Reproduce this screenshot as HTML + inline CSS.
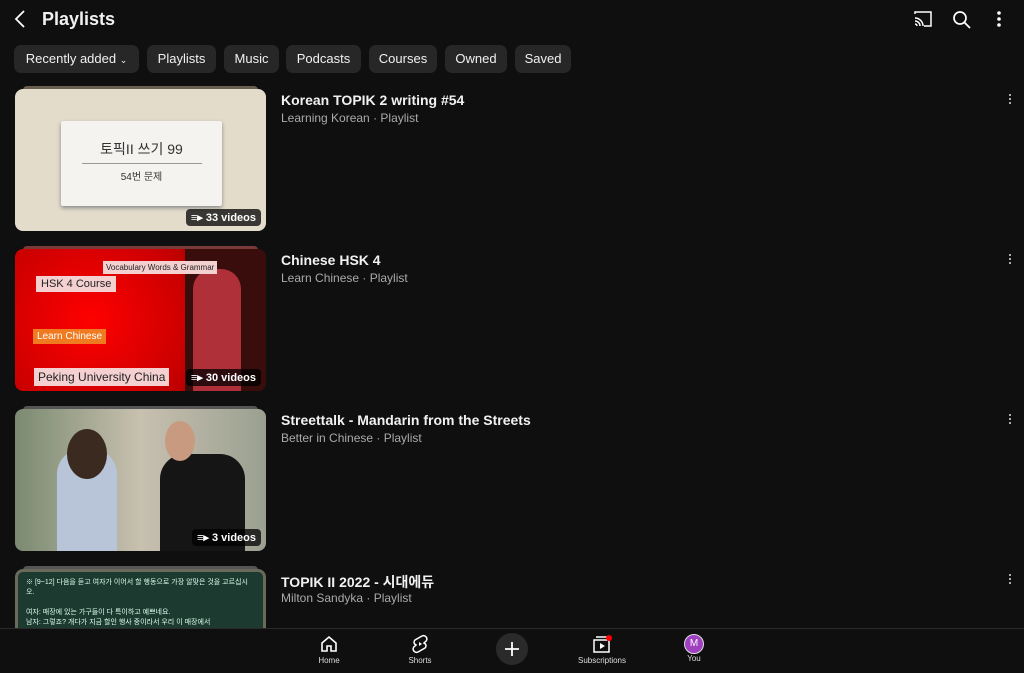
<!DOCTYPE html>
<html><head><meta charset="utf-8"><style>
*{margin:0;padding:0;box-sizing:border-box}
html,body{width:1024px;height:673px;overflow:hidden}
body{background:#0f0f0f;color:#f1f1f1;font-family:"Liberation Sans","Noto Sans CJK KR",sans-serif;position:relative}
.top{position:absolute;left:0;top:0;width:1024px;height:40px}
.title{position:absolute;left:42px;top:9px;font-size:18px;font-weight:bold}
.chip{position:absolute;top:45px;height:28px;background:#272727;border-radius:7px;font-size:13px;line-height:28px;text-align:center;color:#f1f1f1}
.row{position:absolute;left:15px;width:1000px;height:145px}
.th{position:absolute;left:0;top:3px;width:251px;height:142px;border-radius:8px;overflow:hidden}
.stack{position:absolute;left:8px;top:0;width:235px;height:4px;border-radius:4px 4px 0 0;background:#6a5e4e}
.badge{position:absolute;right:5px;bottom:5px;background:rgba(0,0,0,.75);color:#fff;font-size:11px;font-weight:bold;padding:2px 5px;border-radius:4px}
.t{position:absolute;left:266px;top:6px;font-size:14px;font-weight:bold}
.s{position:absolute;left:266px;top:25px;font-size:12px;color:#aaa}
.dots{position:absolute;left:994px;top:8px;width:2px}
.dots i{display:block;width:2px;height:2px;background:#ddd;border-radius:50%;margin-bottom:2px}
.nav{position:absolute;top:628px;left:0;width:1024px;height:45px;border-top:1px solid #2a2a2a;background:#0f0f0f}
.ni{position:absolute;top:5px;font-size:8px;color:#ddd;text-align:center;width:80px}
</style></head><body>
<div class="top">
<svg style="position:absolute;left:14px;top:10px" width="12" height="18"><path d="M10 1L2 9l8 8" stroke="#fff" stroke-width="1.8" fill="none"/></svg>
<div class="title">Playlists</div>
<svg style="position:absolute;left:913px;top:10px" width="20" height="18"><path d="M2 4V2h16v14h-7M2 8a8 8 0 0 1 8 8M2 11a5 5 0 0 1 5 5M2 14a2 2 0 0 1 2 2" stroke="#fff" stroke-width="1.5" fill="none"/></svg>
<svg style="position:absolute;left:952px;top:10px" width="20" height="20"><circle cx="8" cy="8" r="6" stroke="#fff" stroke-width="1.7" fill="none"/><path d="M12.5 12.5L18 18" stroke="#fff" stroke-width="1.8"/></svg>
<svg style="position:absolute;left:996px;top:11px" width="6" height="18"><circle cx="3" cy="2" r="1.8" fill="#fff"/><circle cx="3" cy="8" r="1.8" fill="#fff"/><circle cx="3" cy="14" r="1.8" fill="#fff"/></svg>
</div>
<div class="chip" style="left:14px;width:125px">Recently added <span style="font-size:9px">⌄</span></div>
<div class="chip" style="left:147px;width:69px">Playlists</div>
<div class="chip" style="left:224px;width:55px">Music</div>
<div class="chip" style="left:286px;width:75px">Podcasts</div>
<div class="chip" style="left:369px;width:68px">Courses</div>
<div class="chip" style="left:445px;width:62px">Owned</div>
<div class="chip" style="left:515px;width:56px">Saved</div>

<div class="row" style="top:86px"><div class="stack"></div><div class="th" style="background:#e4dccb">
<div style="position:absolute;left:46px;top:32px;width:161px;height:85px;background:#f4f3f0;box-shadow:0 2px 4px #888;border-radius:2px;text-align:center;color:#333">
<div style="font-size:14px;margin-top:18px">토픽II 쓰기 99</div><div style="border-top:1px solid #999;width:120px;margin:4px auto"></div><div style="font-size:10px">54번 문제</div></div>
<div class="badge">≡▸ 33 videos</div></div>
<div class="t">Korean TOPIK 2 writing #54</div><div class="s">Learning Korean · Playlist</div><div class="dots"><i></i><i></i><i></i></div></div>

<div class="row" style="top:246px"><div class="stack" style="background:#7a3a3a"></div><div class="th" style="background:radial-gradient(circle at 30% 50%,#f00,#c00 50%,#700)">
<div style="position:absolute;left:170px;top:0;width:81px;height:142px;background:#3a0d0d"></div>
<div style="position:absolute;left:178px;top:20px;width:48px;height:122px;background:#b0303a;border-radius:20px 20px 0 0"></div>
<div style="position:absolute;left:21px;top:27px;background:#f4d0d0;color:#222;font-size:11px;padding:2px 5px">HSK 4 Course</div>
<div style="position:absolute;left:88px;top:12px;background:#f4d0d0;color:#222;font-size:8px;padding:2px 3px">Vocabulary Words &amp; Grammar</div>
<div style="position:absolute;left:18px;top:80px;background:#f07a20;color:#fff;font-size:10px;padding:2px 4px">Learn Chinese</div>
<div style="position:absolute;left:19px;top:119px;background:#f4d0d0;color:#222;font-size:12px;padding:2px 4px">Peking University China</div>
<div class="badge">≡▸ 30 videos</div></div>
<div class="t">Chinese HSK 4</div><div class="s">Learn Chinese · Playlist</div><div class="dots"><i></i><i></i><i></i></div></div>

<div class="row" style="top:406px"><div class="stack" style="background:#555"></div><div class="th" style="background:linear-gradient(90deg,#7a8a70,#c8c0b0 50%,#9aa090)">
<div style="position:absolute;left:42px;top:40px;width:60px;height:102px;background:#b8c4d8;border-radius:25px 25px 0 0"></div>
<div style="position:absolute;left:52px;top:20px;width:40px;height:50px;background:#3a2a20;border-radius:50%"></div>
<div style="position:absolute;left:145px;top:45px;width:85px;height:97px;background:#151515;border-radius:25px 25px 0 0"></div>
<div style="position:absolute;left:150px;top:12px;width:30px;height:40px;background:#c89a80;border-radius:50%"></div>
<div class="badge">≡▸ 3 videos</div></div>
<div class="t">Streettalk - Mandarin from the Streets</div><div class="s">Better in Chinese · Playlist</div><div class="dots"><i></i><i></i><i></i></div></div>

<div class="row" style="top:566px;height:62px;overflow:hidden"><div class="stack" style="background:#555"></div><div class="th" style="background:#1c3a30;border:3px solid #6a6a5a">
<div style="font-size:7px;color:#dfe;padding:6px 8px;line-height:10px">※ [9~12] 다음을 듣고 여자가 이어서 할 행동으로 가장 알맞은 것을 고르십시오.<br><br>여자: 매장에 있는 가구들이 다 특이하고 예쁘네요.<br>남자: 그렇죠? 개다가 지금 할인 행사 중이라서 우리 이 매장에서</div></div>
<div class="t">TOPIK II 2022 - 시대에듀</div><div class="s">Milton Sandyka · Playlist</div><div class="dots"><i></i><i></i><i></i></div></div>

<div class="nav">
<div class="ni" style="left:289px"><svg width="20" height="20" viewBox="0 0 20 20"><path d="M3 9L10 3l7 6v8h-5v-5H8v5H3z" stroke="#fff" stroke-width="1.6" fill="none"/></svg><div>Home</div></div>
<div class="ni" style="left:380px"><svg width="20" height="20" viewBox="0 0 20 20"><path d="M12 2l-7 4a3 3 0 0 0 1 5l-1 1a3 3 0 0 0 3 6l7-4a3 3 0 0 0-1-5l1-1a3 3 0 0 0-3-6z" stroke="#fff" stroke-width="1.5" fill="none"/><path d="M9 8v4l3-2z" fill="#fff"/></svg><div>Shorts</div></div>
<div style="position:absolute;left:496px;top:4px;width:32px;height:32px;border-radius:50%;background:#2a2a2a"><svg width="32" height="32"><path d="M16 9v14M9 16h14" stroke="#fff" stroke-width="1.8"/></svg></div>
<div class="ni" style="left:562px"><svg width="22" height="20" viewBox="0 0 22 20"><rect x="3" y="6" width="15" height="12" stroke="#fff" stroke-width="1.5" fill="none"/><path d="M5 3h11" stroke="#fff" stroke-width="1.5"/><path d="M9 9v6l5-3z" fill="#fff"/><circle cx="18" cy="4" r="3" fill="#f00"/></svg><div>Subscriptions</div></div>
<div class="ni" style="left:654px"><div style="width:20px;height:20px;margin:0 auto;border-radius:50%;background:#a040c0;border:1px solid #ddd;font-size:10px;line-height:18px;color:#fff">M</div><div>You</div></div>
</div>
</body></html>
